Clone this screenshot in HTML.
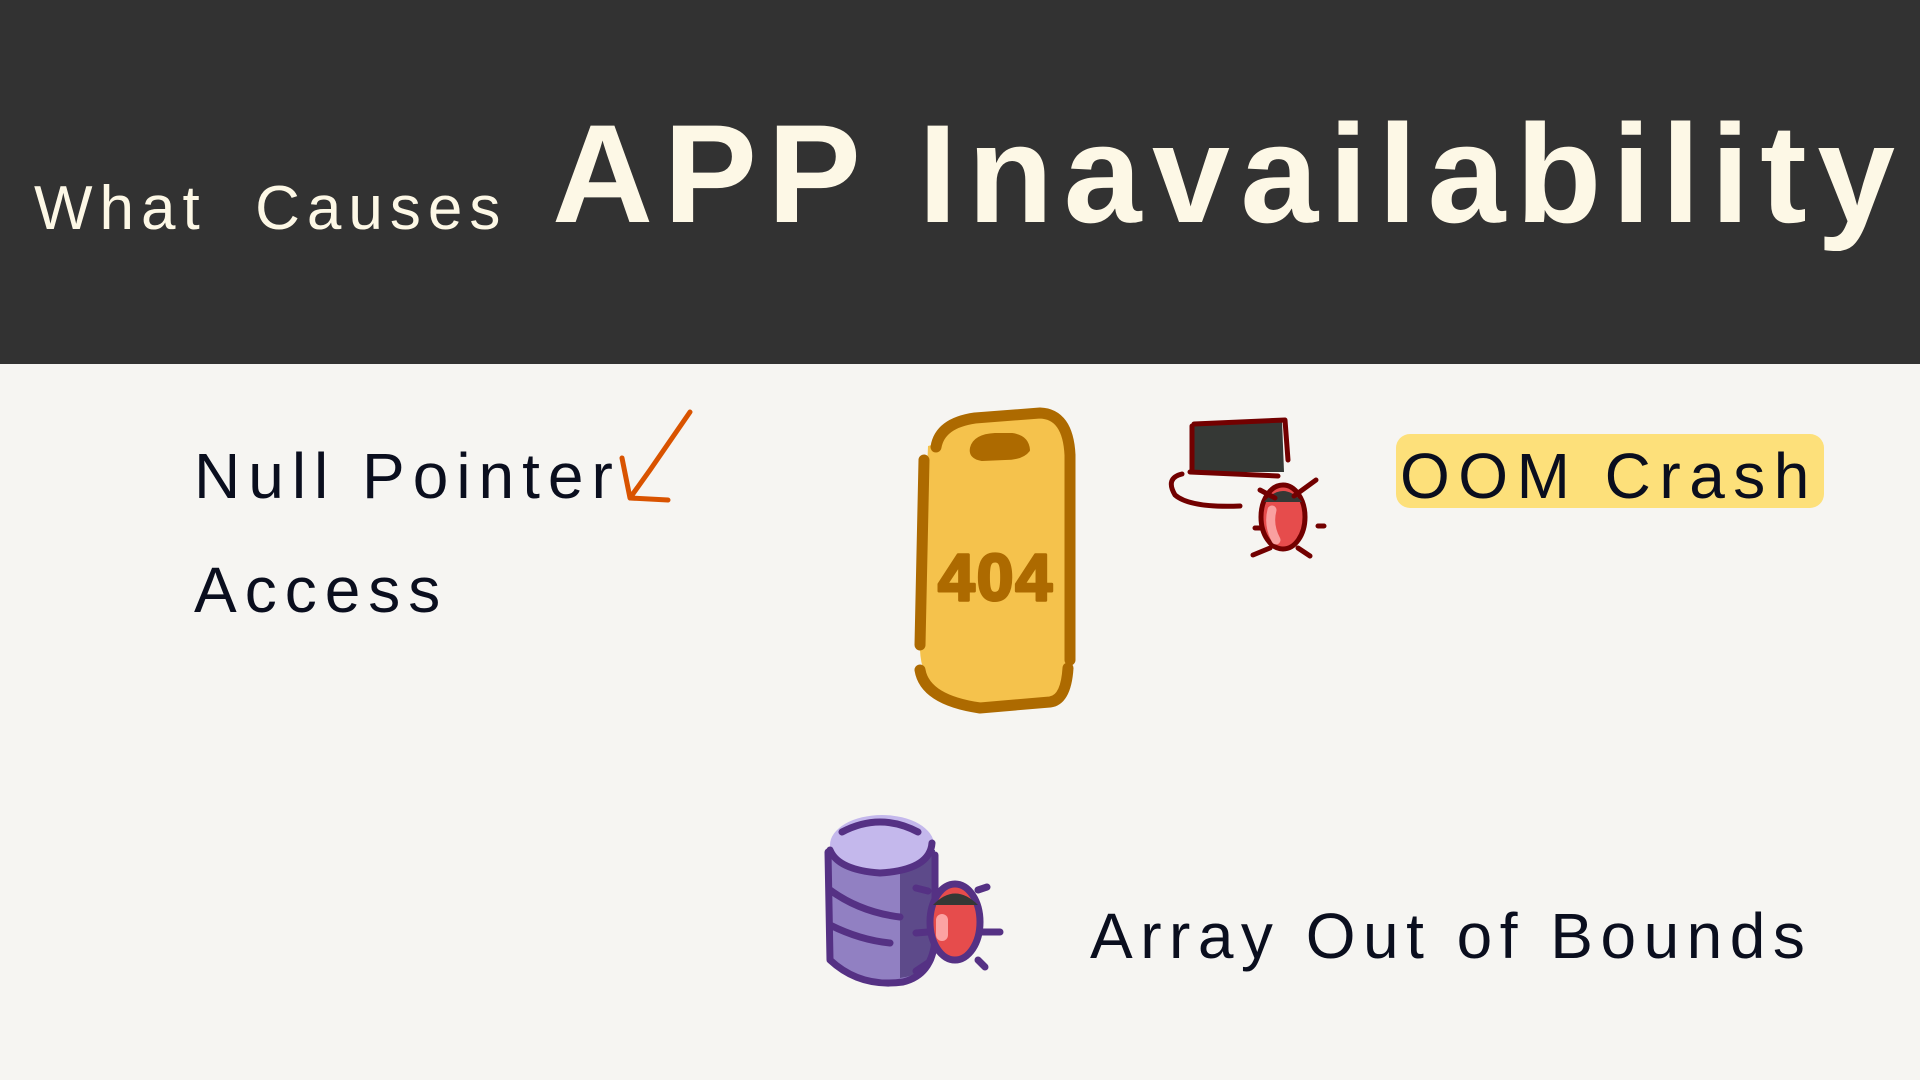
<!DOCTYPE html>
<html><head><meta charset="utf-8"><style>
html,body{margin:0;padding:0}
body{width:1920px;height:1080px;background:#f6f5f2;position:relative;overflow:hidden;font-family:"Liberation Sans","DejaVu Sans",sans-serif}
.hdr{position:absolute;left:0;top:0;width:1920px;height:364px;background:#323232}
.t{position:absolute;white-space:nowrap;line-height:1}
.w{color:#fdf8e6}
.k{color:#0a0e1e}
.hl{position:absolute;left:1396px;top:434px;width:428px;height:74px;background:#fde07a;border-radius:14px}
</style></head><body>
<div class="hdr"></div>
<div class="t w" style="left:34px;top:178px;font-size:62px;letter-spacing:7px">What&nbsp; Causes</div>
<div class="t w" style="left:552px;top:104px;font-size:140px;font-weight:bold;letter-spacing:10.5px">APP Inavailability</div>
<div class="t k" style="left:194px;top:444px;font-size:64px;letter-spacing:8px">Null Pointer</div>
<div class="t k" style="left:194px;top:558px;font-size:64px;letter-spacing:8px">Access</div>
<div class="hl"></div>
<div class="t k" style="left:1400px;top:444px;font-size:64px;letter-spacing:8.5px">OOM Crash</div>
<div class="t k" style="left:1090px;top:904px;font-size:64px;letter-spacing:7.5px">Array Out of Bounds</div>
<svg width="1920" height="1080" style="position:absolute;left:0;top:0" fill="none" stroke-linecap="round" stroke-linejoin="round">
<path d="M690 412 L650 470 L630 498 L668 500 M622 458 L630 498" stroke="#d95300" stroke-width="5"/>
<path d="M928 446 L920 650 Q922 700 980 708 L1050 706 Q1068 700 1068 660 L1068 455 Q1068 414 1040 413 L975 418 Q935 425 932 445Z" fill="#f5c24c" stroke="none"/>
<path d="M936 447 Q940 423 975 418 L1040 413 Q1068 414 1070 455 L1070 660 M1068 668 Q1066 700 1050 702 L980 708 Q925 700 920 670 M920 645 L924 460" stroke="#ad6a00" stroke-width="11"/>
<path d="M972 448 Q975 436 995 435 L1012 435 Q1027 437 1028 450 Q1022 458 1005 458 L982 459 Q970 457 972 448Z" fill="#ad6a00" stroke="#ad6a00" stroke-width="4"/>
<text x="938" y="600" font-family="Liberation Sans,sans-serif" font-weight="bold" font-size="66" fill="#ad6a00" stroke="#ad6a00" stroke-width="3" letter-spacing="2">404</text>
<path d="M1192 424 L1282 420 L1284 472 L1192 472Z" fill="#353835"/>
<path d="M1192 426 L1192 470 M1194 424 L1285 420 L1288 460 M1190 472 L1278 476 M1182 474 Q1165 478 1175 495 Q1190 508 1240 506" stroke="#720000" stroke-width="5"/>
<ellipse cx="1283" cy="517" rx="22" ry="32" fill="#e64c4c" stroke="#720000" stroke-width="5"/>
<path d="M1264 502 Q1283 480 1302 502Z" fill="#353835"/>
<path d="M1272 510 Q1268 525 1276 540" stroke="#f9a0a0" stroke-width="9"/>
<path d="M1260 490 L1275 498 M1294 496 L1316 480 M1255 528 L1262 528 M1318 526 L1324 526 M1253 555 L1270 548 M1298 548 L1310 556" stroke="#720000" stroke-width="5"/>
<path d="M828 850 L832 960 Q860 985 905 980 Q935 970 935 955 L935 850 Z" fill="#9180c2"/>
<path d="M900 850 L935 850 L935 955 Q925 975 900 978Z" fill="#5d4a8a"/>
<ellipse cx="882" cy="845" rx="52" ry="30" fill="#c4b8ec"/>
<path d="M842 832 Q880 812 918 832 M932 843 Q930 870 880 873 Q838 870 830 850 M828 852 L830 960 Q860 988 903 982 Q932 975 935 940 M935 855 L935 905 M830 890 Q860 912 900 917 M830 925 Q860 940 890 943 M916 888 L928 891 M916 933 L928 932 M916 971 L928 963" stroke="#553184" stroke-width="7"/>
<ellipse cx="955" cy="922" rx="25" ry="38" fill="#e64c4c" stroke="#553184" stroke-width="7"/>
<path d="M933 905 Q955 882 978 905Z" fill="#353835"/>
<path d="M942 920 L942 935" stroke="#fca3a3" stroke-width="12"/>
<path d="M978 890 L987 887 M982 932 L1000 932 M978 960 L985 967" stroke="#553184" stroke-width="7"/>
</svg>
</body></html>
